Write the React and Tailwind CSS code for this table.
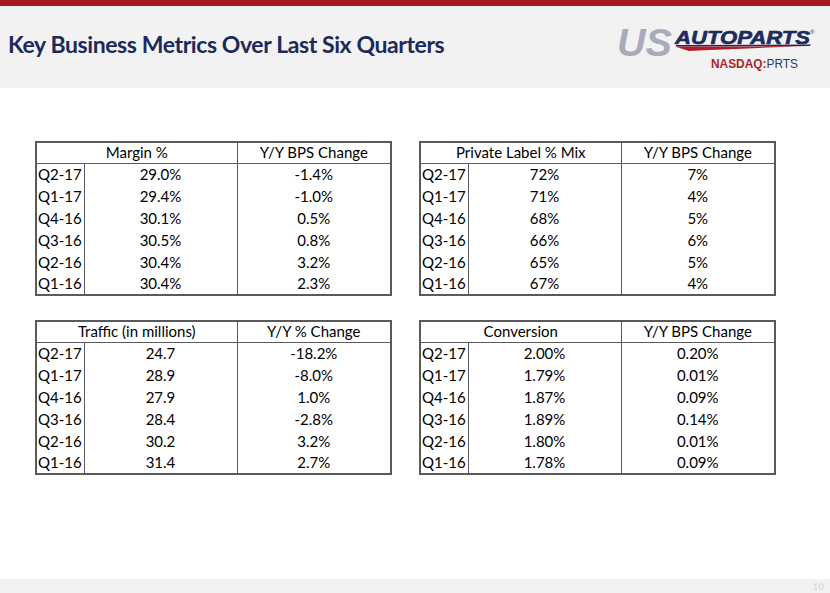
import React from 'react';

const tables = [
  {
    title: 'Margin %',
    change: 'Y/Y BPS Change',
    rows: [
      ['Q2-17', '29.0%', '-1.4%'],
      ['Q1-17', '29.4%', '-1.0%'],
      ['Q4-16', '30.1%', '0.5%'],
      ['Q3-16', '30.5%', '0.8%'],
      ['Q2-16', '30.4%', '3.2%'],
      ['Q1-16', '30.4%', '2.3%'],
    ],
  },
  {
    title: 'Private Label % Mix',
    change: 'Y/Y BPS Change',
    rows: [
      ['Q2-17', '72%', '7%'],
      ['Q1-17', '71%', '4%'],
      ['Q4-16', '68%', '5%'],
      ['Q3-16', '66%', '6%'],
      ['Q2-16', '65%', '5%'],
      ['Q1-16', '67%', '4%'],
    ],
  },
  {
    title: 'Traffic (in millions)',
    change: 'Y/Y % Change',
    rows: [
      ['Q2-17', '24.7', '-18.2%'],
      ['Q1-17', '28.9', '-8.0%'],
      ['Q4-16', '27.9', '1.0%'],
      ['Q3-16', '28.4', '-2.8%'],
      ['Q2-16', '30.2', '3.2%'],
      ['Q1-16', '31.4', '2.7%'],
    ],
  },
  {
    title: 'Conversion',
    change: 'Y/Y BPS Change',
    rows: [
      ['Q2-17', '2.00%', '0.20%'],
      ['Q1-17', '1.79%', '0.01%'],
      ['Q4-16', '1.87%', '0.09%'],
      ['Q3-16', '1.89%', '0.14%'],
      ['Q2-16', '1.80%', '0.01%'],
      ['Q1-16', '1.78%', '0.09%'],
    ],
  },
];

function MetricTable({ data }) {
  return (
    <table className="w-[355px] border-collapse border-2 border-[#5a5a5a] table-fixed text-[15px] leading-none text-black">
      <colgroup>
        <col className="w-[48px]" />
        <col className="w-[153px]" />
        <col className="w-[154px]" />
      </colgroup>
      <thead>
        <tr className="h-[21px]">
          <th colSpan={2} className="font-normal text-center border-r border-b border-[#5a5a5a]">{data.title}</th>
          <th className="font-normal text-center border-b border-[#5a5a5a]">{data.change}</th>
        </tr>
      </thead>
      <tbody>
        {data.rows.map(r => (
          <tr key={r[0]} className="h-[22px]">
            <td className="pl-[1px] text-left border-r border-[#5a5a5a]">{r[0]}</td>
            <td className="text-center border-r border-[#5a5a5a]">{r[1]}</td>
            <td className="text-center">{r[2]}</td>
          </tr>
        ))}
      </tbody>
    </table>
  );
}

// logo drawn as svg, text kept as real <text>
function Logo() {
  const font = '"Liberation Sans", Arial, sans-serif';
  return (
    <svg width="206" height="52" viewBox="-6 0 206 52" className="overflow-visible">
      <text x="2" y="31" fontFamily={font} fontSize="39" fontWeight="900" fontStyle="italic" fill="#a9abbb" textLength="55" lengthAdjust="spacingAndGlyphs">US</text>
      <text x="60" y="19" fontFamily={font} fontSize="18" fontWeight="700" fontStyle="italic" fill="#1c2b5e" textLength="135" lengthAdjust="spacingAndGlyphs" stroke="#1c2b5e" strokeWidth="0.6">AUTOPARTS</text>
      <text x="195" y="9" fontFamily={font} fontSize="6" fill="#1c2b5e">®</text>
      <path d="M61 20 L196 19.5 L195 21 L61 21.5 Z" fill="#1c2b5e" />
      <path d="M60 21.5 L192 21 Q150 22.5 74 26 Z" fill="#b01f28" />
      <text x="96" y="43" fontFamily={font} fontSize="12.5" fontWeight="700" textLength="87" lengthAdjust="spacingAndGlyphs">
        <tspan fill="#b01f28">NASDAQ:</tspan>
        <tspan fill="#2a3a6a" fontWeight="400">PRTS</tspan>
      </text>
    </svg>
  );
}

export default function App() {
  return (
    <div className="w-[830px] h-[593px] bg-white flex flex-col overflow-hidden" style={{ fontFamily: 'Lato, "Open Sans", sans-serif' }}>
      <div className="h-[6px] bg-[#a51c24]" />
      <div className="h-[82px] bg-[#f2f2f2] flex justify-between pl-[8px] pr-[15px]">
        <h1 className="mt-[27px] text-[23px] font-bold text-[#1b2a5a] tracking-[-0.4px] leading-none">Key Business Metrics Over Last Six Quarters</h1>
        <div className="mt-[19px]">
          <Logo />
        </div>
      </div>
      <div className="flex-1 pt-[53px] pl-[35px]">
        <div className="grid grid-cols-[355px_355px] gap-x-[29px] gap-y-[24px]">
          {tables.map(t => (
            <MetricTable key={t.title} data={t} />
          ))}
        </div>
      </div>
      <div className="h-[14px] bg-[#f2f2f2] flex justify-end items-center pr-[6px]">
        <span className="text-[10px] font-bold text-[#dcdcdc]">10</span>
      </div>
    </div>
  );
}
